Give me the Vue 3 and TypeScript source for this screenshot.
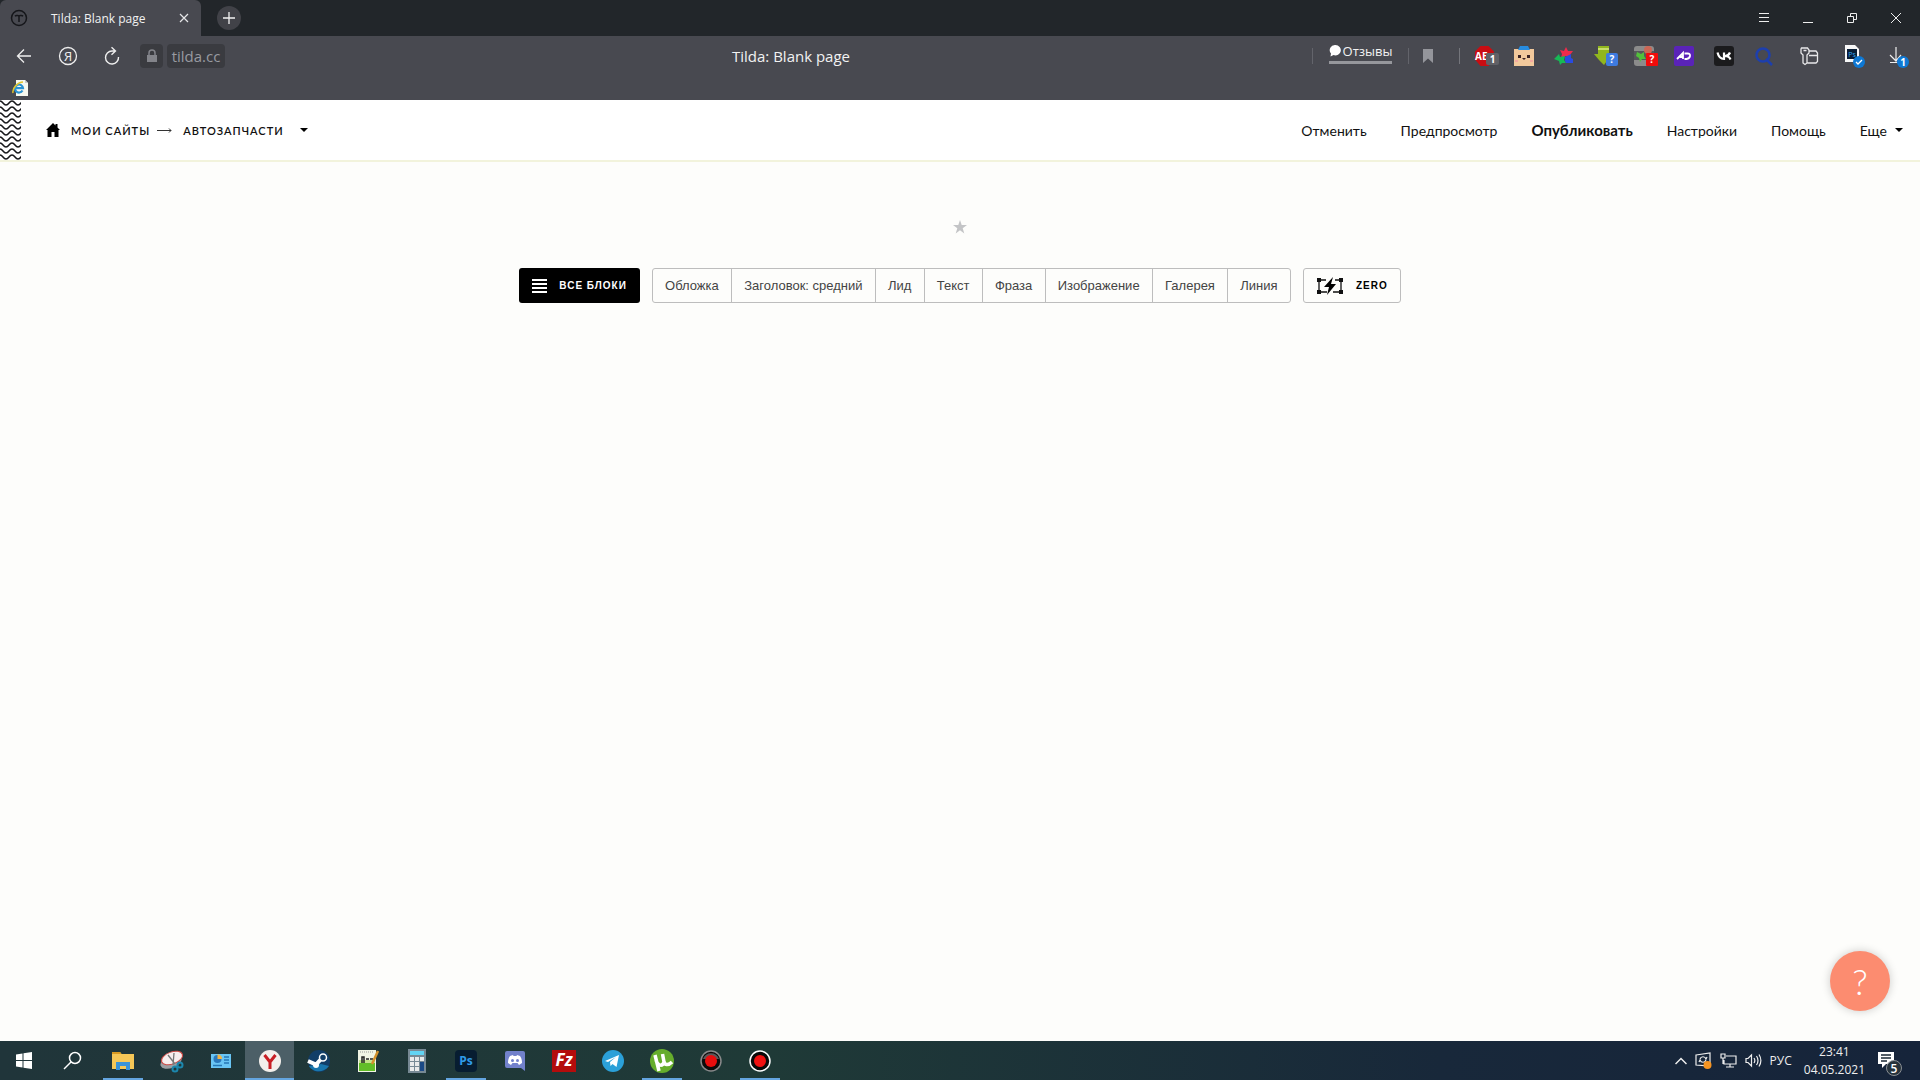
<script setup lang="ts">
interface Task { id: string; label: string; open?: boolean; active?: boolean }

const blocks: string[] = ['Обложка', 'Заголовок: средний', 'Лид', 'Текст', 'Фраза', 'Изображение', 'Галерея', 'Линия']

const extensions = ['adblock', 'robot', 'pinwheel', 'android', 'photo', 'ad', 'vk', 'search']

const tasks: Task[] = [
  { id: 'start', label: 'Пуск' },
  { id: 'find', label: 'Поиск' },
  { id: 'folder', label: 'Проводник', open: true },
  { id: 'snip', label: 'Ножницы' },
  { id: 'panel', label: 'Панель управления' },
  { id: 'yandex', label: 'Яндекс.Браузер', active: true },
  { id: 'steam', label: 'Steam' },
  { id: 'notepad', label: 'Notepad++' },
  { id: 'calc', label: 'Калькулятор' },
  { id: 'ps', label: 'Photoshop', open: true },
  { id: 'discord', label: 'Discord' },
  { id: 'filezilla', label: 'FileZilla' },
  { id: 'telegram', label: 'Telegram' },
  { id: 'utorrent', label: 'uTorrent', open: true },
  { id: 'bandicam', label: 'Bandicam' },
  { id: 'record', label: 'Запись', open: true },
]
</script>

<template>
  <div class="screen">
    <div class="tabs">
      <div class="tab">
        <svg class="favicon" width="18" height="18" viewBox="0 0 18 18" fill="none" stroke="#15161a" stroke-width="1.5">
          <circle cx="9" cy="9" r="7.5" />
          <path d="M5 7.2c1.2-1.6 2.600-.4 4-.4s2.800-1.200 4 .4M9 7v6" />
        </svg>
        <span class="tab-title">Tilda: Blank page</span>
        <button class="bare" aria-label="Закрыть вкладку">
          <svg width="10" height="10" viewBox="0 0 10 10" stroke="#e6e6e8" stroke-width="1.200"><path d="M1 1l8 8M9 1L1 9" /></svg>
        </button>
      </div>
      <button class="new-tab" aria-label="Новая вкладка">
        <svg width="12" height="12" viewBox="0 0 12 12" stroke="#f2f2f2" stroke-width="1.300"><path d="M6 0v12M0 6h12" /></svg>
      </button>
      <div class="window-controls">
        <button class="cell" aria-label="Меню"><svg width="12" height="12" viewBox="0 0 12 12" stroke="#eee"><path d="M1 1.500h10M1 5.500h10M1 9.500h10" /></svg></button>
        <button class="cell" aria-label="Свернуть"><svg width="12" height="12" viewBox="0 0 12 12" stroke="#eee"><path d="M1 10.500h10" /></svg></button>
        <button class="cell" aria-label="Восстановить"><svg width="12" height="12" viewBox="0 0 12 12" fill="none" stroke="#eee"><path d="M1.500 4.500h6v6h-6zM4.500 4V1.500h6v6H8" /></svg></button>
        <button class="cell" aria-label="Закрыть"><svg width="12" height="12" viewBox="0 0 12 12" stroke="#eee"><path d="M1 1l10 10M11 1L1 11" /></svg></button>
      </div>
    </div>

    <div class="toolbar">
      <button class="cell" aria-label="Назад"><svg width="16" height="16" viewBox="0 0 16 16" fill="none" stroke="#eee" stroke-width="1.300"><path d="M15 8H2M8 1.500L1.500 8 8 14.500" /></svg></button>
      <button class="cell" aria-label="Яндекс">
        <svg width="20" height="20" viewBox="0 0 20 20"><circle cx="10" cy="10" r="8.500" fill="none" stroke="#eee" stroke-width="1.300" /><text x="10" y="14.500" text-anchor="middle" font-size="13" fill="#eee">Я</text></svg>
      </button>
      <button class="cell" aria-label="Обновить"><svg width="18" height="20" viewBox="0 0 18 20" fill="none" stroke="#eee" stroke-width="1.400"><path d="M12 5H9A6.500 6.500 0 1 0 15.500 11M8.500 1.200L12.500 5 8.500 8.800" /></svg></button>
      <div class="address">
        <span class="chip"><svg width="12" height="14" viewBox="0 0 12 14"><path d="M1 6h10v7H1z" fill="#83848a" /><path d="M3 6.500V4a3 3 0 0 1 6 0v2.500" fill="none" stroke="#83848a" stroke-width="1.500" /></svg></span>
        <span class="chip domain">tilda.cc</span>
      </div>
      <div class="page-title">Tilda: Blank page</div>
      <div class="reviews">
        <a href="#" class="review-link">
          <svg width="13" height="12" viewBox="0 0 13 12" fill="#fff"><path d="M6.500 0a5.500 5.200 0 1 1-2 10.100L1.500 11.500l.5-3A5.500 5.200 0 0 1 6.500 0z" /></svg>
          <span>Отзывы</span>
        </a>
      </div>
      <button class="bookmark" aria-label="В закладки"><svg width="10" height="14" viewBox="0 0 10 14" fill="#94959b"><path d="M0 0h10v14L5 9.500 0 14z" /></svg></button>
      <div class="extensions">
        <button v-for="e in extensions" :key="e" class="cell ext" :aria-label="e">
          <svg v-if="e === 'adblock'" width="26" height="22" viewBox="0 0 26 22">
            <path d="M6.500 1h8L20 6.500v8L14.500 21h-8L1 14.500v-8z" fill="#c90d12" />
            <text x="1" y="15" font-size="10" font-weight="700" fill="#fff">AE</text>
            <rect x="12" y="8" width="13" height="12" rx="2" fill="#606066" /><text x="18.500" y="18" text-anchor="middle" font-size="10" font-weight="700" fill="#fff">1</text>
          </svg>
          <svg v-else-if="e === 'robot'" width="20" height="20" viewBox="0 0 20 20">
            <rect y="3" width="20" height="17" fill="#f2c99c" /><path d="M6 0h8l2 4H4z" fill="#278ce0" />
            <path d="M4 9h3v3H4zM13 9h3v3h-3zM8 12h4l-2 2z" fill="#3b2424" /><path d="M1 15h3M16 15h3" stroke="#f4a9a0" stroke-width="2" />
          </svg>
          <svg v-else-if="e === 'pinwheel'" width="20" height="20" viewBox="0 0 20 20">
            <path d="M12 1l2 4 5 0-3 4 1 3-5-2-5 2 1-4-2-4 4 1z" fill="#ef2b4b" /><path d="M0 13l5-5 1 3 5-1-1 4 2 3-4 0-2 2-1-4z" fill="#17b955" /><path d="M11 11l6-3v4l2 1v4l-7 0-1-2z" fill="#294be0" />
          </svg>
          <svg v-else-if="e === 'android'" width="26" height="22" viewBox="0 0 26 22">
            <path d="M4 1h11v8h4l-4 4-5 7-5-5-5-6h4z" fill="#91b61e" /><path d="M4 4h11" stroke="#c7de6a" stroke-width="2" />
            <rect x="12" y="8" width="12" height="13" rx="2" fill="#3e7be0" /><text x="18" y="18" text-anchor="middle" font-size="10" font-weight="700" fill="#fff">?</text>
          </svg>
          <svg v-else-if="e === 'photo'" width="26" height="22" viewBox="0 0 26 22">
            <rect x="0" y="1" width="20" height="20" rx="3" fill="#8b8b8b" /><rect x="0" y="6" width="20" height="9" fill="#55575a" /><path d="M3 7l4 2 3-2 0 4 2 3-4 0-2 3-1-4-3-2z" fill="#52bf3b" /><circle cx="14" cy="5" r="4" fill="#cc6655" />
            <rect x="12" y="8" width="12" height="13" rx="1" fill="#f00b0b" /><text x="18" y="18" text-anchor="middle" font-size="10" font-weight="700" fill="#fff">?</text>
          </svg>
          <svg v-else-if="e === 'ad'" width="20" height="20" viewBox="0 0 20 20">
            <rect width="20" height="20" rx="2" fill="#5a23b8" /><path d="M3 13l6-6v6M6 11h3M10.500 7.500h3q3 0 2.500 2.500t-3.500 3h-2" fill="none" stroke="#fff" stroke-width="1.800" />
          </svg>
          <svg v-else-if="e === 'vk'" width="20" height="20" viewBox="0 0 20 20">
            <rect width="20" height="20" rx="3" fill="#1b1b1d" /><path d="M3.500 6.500c1 4 3 6.500 6.500 6.500V6.500M16 6.500C15 9 13 10 11 10c2 0 4.500 1 5.500 3.500" fill="none" stroke="#fff" stroke-width="2.200" />
          </svg>
          <svg v-else width="20" height="20" viewBox="0 0 20 20" fill="none" stroke="#1d3fae">
            <circle cx="9" cy="9" r="6.500" stroke-width="2.500" /><path d="M12 13l6 6" stroke-width="2.500" />
          </svg>
        </button>
      </div>
      <button class="cell" aria-label="Пароли">
        <svg width="20" height="20" viewBox="0 0 20 20" fill="none" stroke="#e8e8ea" stroke-width="1.300"><path d="M2.500 2h6l1.500 2v3L8 9v8l-2 1.500L4 17V9L2 7V3zM4.500 4.500h3M10 5h7l1.500 2v8.500L17 17H8.500M10 9.500h8.500" /></svg>
      </button>
      <button class="cell badged" aria-label="Загруженный файл">
        <svg width="22" height="24" viewBox="0 0 22 24"><path d="M1 1h10l4 4v13H1z" fill="#f7f7f7" /><rect x="3" y="5" width="10" height="10" fill="#081d35" /><text x="8" y="12.500" text-anchor="middle" font-size="7" fill="#35a5f2">Ps</text><circle cx="15" cy="18" r="6" fill="#0e78d4" /><path d="M12 18l2 2 4-4" fill="none" stroke="#fff" stroke-width="1.300" /></svg>
      </button>
      <button class="cell badged" aria-label="Загрузки">
        <svg width="22" height="24" viewBox="0 0 22 24"><path d="M8 3v14M2 11l6 6 5-6M2 18.500h8" fill="none" stroke="#eee" stroke-width="1.200" /><circle cx="15" cy="18" r="6" fill="#0e78d4" /><text x="15" y="22" text-anchor="middle" font-size="10" font-weight="700" fill="#fff">1</text></svg>
      </button>
    </div>

    <div class="bookmarks">
      <a href="#" aria-label="Закладка">
        <svg width="18" height="16" viewBox="0 0 18 16"><path d="M4 0h9l3 3v13H4z" fill="#f7f8ee" /><path d="M13 0l3 3h-3z" fill="#c8ccc8" /><path d="M10.500 10.500A4 4 0 1 1 11 8.200H4" fill="none" stroke="#2992d2" stroke-width="2.200" /><path d="M1 13C0 8 6 2 11 2" fill="none" stroke="#e3c52c" stroke-width="1.500" /></svg>
      </a>
    </div>

    <header class="site-header">
      <svg class="waves" width="21" height="60" aria-hidden="true">
        <defs><pattern id="wave" width="12" height="6" patternUnits="userSpaceOnUse"><path d="M-6 5C-3 5-3 1 0 1S3 5 6 5 9 1 12 1s3 4 6 4" fill="none" stroke="#17181b" stroke-width="1.500" /></pattern></defs>
        <rect width="21" height="60" fill="url(#wave)" />
      </svg>
      <nav class="crumbs" aria-label="Путь">
        <svg width="14" height="14" viewBox="0 0 14 14"><path d="M7 0l2.500 2.500V1h2v3.500L14 7h-1.500v7H8.500V9h-3v5H1.500V7H0z" /></svg>
        <a href="#">МОИ САЙТЫ</a>
        <svg class="arrow" width="15" height="7" viewBox="0 0 15 7" fill="none" stroke="#333"><path d="M0 3.500h14M12 1.500l2 2-2 2" /></svg>
        <a href="#">АВТОЗАПЧАСТИ</a>
        <button class="bare caret" aria-label="Список страниц"><svg width="8" height="4" viewBox="0 0 8 4"><path d="M0 0h8L4 4z" /></svg></button>
      </nav>
      <nav class="menu" aria-label="Действия">
        <a href="#">Отменить</a>
        <a href="#">Предпросмотр</a>
        <a href="#" class="publish">Опубликовать</a>
        <a href="#">Настройки</a>
        <a href="#">Помощь</a>
        <a href="#" class="more">Еще <svg width="8" height="4" viewBox="0 0 8 4"><path d="M0 0h8L4 4z" /></svg></a>
      </nav>
    </header>

    <main class="page">
      <svg class="star" width="14" height="14" viewBox="0 0 14 14" fill="#c3c4c6"><path d="M7 0l1.700 5H14L9.700 8.200 11.300 13.500 7 10.300 2.700 13.500 4.300 8.200 0 5h5.300z" /></svg>
      <div class="library">
        <button class="all">
          <svg width="15" height="14" viewBox="0 0 15 14" stroke="#fff" stroke-width="2"><path d="M0 1h15M0 5h15M0 9h15M0 13h15" /></svg>
          <span>ВСЕ БЛОКИ</span>
        </button>
        <div class="group">
          <button v-for="b in blocks" :key="b">{{ b }}</button>
        </div>
        <button class="zero">
          <svg width="28" height="18" viewBox="0 0 28 18"><path d="M10 3H3v12h8M19 3h6v12h-8" fill="none" stroke="#111" stroke-width="1.300" /><path d="M1 1h4v4H1zM23 1h4v4h-4zM1 13h4v4H1zM23 13h4v4h-4z" fill="#111" /><path d="M17 0L8 10h5l-2 8 9-11h-5z" fill="#000" /></svg>
          <span>ZERO</span>
        </button>
      </div>
      <button class="help" aria-label="Помощь">?</button>
    </main>

    <footer class="taskbar">
      <button v-for="t in tasks" :key="t.id" class="task" :class="{ open: t.open, active: t.active }" :aria-label="t.label">
        <svg width="24" height="24" viewBox="0 0 24 24">
          <g v-if="t.id === 'start'" fill="#fff"><path d="M3 5.500l6.500-1V11H3zM10.500 4.300L19 3v8h-8.500zM3 12h6.500v6.500L3 17.500zM10.500 12H19v8l-8.500-1.300z" /></g>
          <g v-else-if="t.id === 'find'" fill="none" stroke="#fff" stroke-width="1.500"><circle cx="13" cy="9" r="5.500" /><path d="M9 13L2 20" /></g>
          <g v-else-if="t.id === 'folder'"><path d="M1 3h8l1.500 2H23v15H1z" fill="#f6c757" /><path d="M1 3h8l1.500 2H1z" fill="#d99a22" /><path d="M5 13h14v8h-4v-4H9v4H5z" fill="#3a93d8" /></g>
          <g v-else-if="t.id === 'snip'"><ellipse cx="11" cy="13" rx="11" ry="6" fill="#9c9ea2" transform="rotate(-20 11 13)" /><ellipse cx="12" cy="9" rx="11" ry="6" fill="#f7eeee" stroke="#cc4a45" transform="rotate(-20 12 9)" /><path d="M8 6l7 9M14 4l-1 12" stroke="#777" stroke-width="1.300" /><g fill="none" stroke="#1c87ad" stroke-width="2"><circle cx="20" cy="16" r="2.500" /><circle cx="15" cy="20" r="2.500" /></g></g>
          <g v-else-if="t.id === 'panel'"><path d="M2 5h20v14H2z" fill="#69c5f4" /><circle cx="8.500" cy="10" r="4" fill="#2a78bb" /><path d="M8.500 10V5.500a4 4 0 0 1 4.500 4.500z" fill="#f4b545" /><path d="M15 8h5M15 11h5M15 14h5M4 16.500h9" stroke="#2677b5" stroke-width="1.500" /></g>
          <g v-else-if="t.id === 'yandex'"><circle cx="12" cy="12" r="11" fill="#f3efeb" /><path d="M6.500 6l5.500 7 5.500-7M12 12v8" fill="none" stroke="#c81e24" stroke-width="3" /></g>
          <g v-else-if="t.id === 'steam'"><circle cx="12" cy="12" r="11" fill="#123e68" /><path d="M2 17c3 6 14 8 20 0l-8-2z" fill="#1976ad" /><path d="M1 12l8 3.500L15 9" fill="none" stroke="#fff" stroke-width="4" /><circle cx="16" cy="8.500" r="3.500" fill="#123e68" stroke="#fff" stroke-width="1.500" /><circle cx="9" cy="16" r="3" fill="#fff" /></g>
          <g v-else-if="t.id === 'notepad'"><path d="M2 1h18v22H2z" fill="#f1f4e4" /><path d="M3 14h16v8H3z" fill="#62bd28" /><path d="M3 11h16v3H3z" fill="#c4e28c" /><path d="M4 3h14" stroke="#999" stroke-dasharray="1 1" /><path d="M6 14V8h2v6M10 10h3M14 10h3" fill="none" stroke="#222" stroke-width="1.500" /><path d="M22 2l-6 13" stroke="#d3912c" stroke-width="2.500" /></g>
          <g v-else-if="t.id === 'calc'"><path d="M3 0h18v24H3z" fill="#778994" /><path d="M5 2h14v4H5z" fill="#62d4f3" /><path d="M5 8h4v4H5zM10 8h4v4h-4zM15 8h4v4h-4zM5 13h4v4H5zM10 13h4v4h-4zM5 18h4v4H5zM10 18h4v4h-4z" fill="#e9eaea" /><path d="M15 13h4v9h-4z" fill="#1c4a86" /></g>
          <g v-else-if="t.id === 'ps'"><rect x="1" y="1" width="22" height="22" rx="4" fill="#071d31" /><text x="12" y="16" text-anchor="middle" font-size="12" font-weight="700" fill="#2f9be8">Ps</text></g>
          <g v-else-if="t.id === 'discord'"><path d="M4 2h16a2 2 0 0 1 2 2v18l-4-3H4a2 2 0 0 1-2-2V4a2 2 0 0 1 2-2z" fill="#7281cb" /><path d="M7 7l3-1 .5 1h3l.5-1 3 1c2 3 2 5 2 7l-3 2-1.500-2h-5L8 16l-3-2c0-3 .5-5 2-7z" fill="#fff" /><circle cx="9.500" cy="11.500" r="1.500" fill="#7281cb" /><circle cx="14.500" cy="11.500" r="1.500" fill="#7281cb" /></g>
          <g v-else-if="t.id === 'filezilla'"><path d="M0 1h24v22H0z" fill="#b40c0c" /><text x="12" y="17" text-anchor="middle" font-size="17" font-weight="700" font-style="italic" fill="#fff">Fz</text></g>
          <g v-else-if="t.id === 'telegram'"><circle cx="12" cy="12" r="11" fill="#2ba0d8" /><path d="M4 12l14-6-2.500 12-4-3-2 2-.5-4 6-5-8 5z" fill="#fff" /></g>
          <g v-else-if="t.id === 'utorrent'"><circle cx="12" cy="12" r="12" fill="#66ad2c" /><path d="M5 6l4 16M6 11c2 7 7 6 8 2L12.500 5M14 12c0 4 4 5 8 1" fill="none" stroke="#fff" stroke-width="3.500" /></g>
          <g v-else-if="t.id === 'bandicam'"><circle cx="12" cy="12" r="10" fill="#0b0b0b" stroke="#88898a" stroke-width="1.500" /><path d="M4 10a8.500 8.500 0 0 1 16 0z" fill="#58595a" /><circle cx="12" cy="12" r="6" fill="#e70d0d" /></g>
          <g v-else><circle cx="12" cy="12" r="10" fill="#090909" stroke="#fff" stroke-width="1.500" /><circle cx="12" cy="12" r="6" fill="#f01010" /></g>
        </svg>
      </button>
      <div class="tray">
        <button class="bare" aria-label="Скрытые значки"><svg width="12" height="8" viewBox="0 0 12 8" fill="none" stroke="#eee" stroke-width="1.500"><path d="M.5 7L6 1.500 11.500 7" /></svg></button>
        <svg width="17" height="17" viewBox="0 0 17 17" fill="none" stroke="#eee" stroke-width="1.200"><path d="M1 3l14-2v13L1 13zM5 7c1-3 5-3 6 0l1-2M11 8c-1 3-5 3-6 0l-1 2" /><circle cx="12.500" cy="13" r="4" fill="#f59422" stroke="none" /></svg>
        <svg width="17" height="15" viewBox="0 0 17 15" fill="none" stroke="#eee" stroke-width="1.200"><path d="M6 3h10v8H4V7M10 11v3M6 14h8M1 1h4v4H1zM3 5v6" /></svg>
        <svg width="17" height="15" viewBox="0 0 17 15" fill="none" stroke="#eee" stroke-width="1.200"><path d="M1 5.500h2L6.500 2v11L3 9.500H1zM9 5c1 1.500 1 3.500 0 5M11.500 3c2 3 2 6 0 9M14 1.500c2.500 4 2.500 8 0 12" /></svg>
        <button class="bare lang">РУС</button>
        <div class="clock"><span>23:41</span><span>04.05.2021</span></div>
        <button class="bare notes" aria-label="Уведомления">
          <svg width="26" height="26" viewBox="0 0 26 26"><path d="M1 2h16v12H9l-4 4v-4H1z" fill="#fff" /><path d="M4 5h10M4 8h10M4 11h6" stroke="#1a2733" stroke-width="1.300" /><circle cx="17" cy="18" r="7.500" fill="#26323b" stroke="#8a8f94" /><text x="17" y="22.500" text-anchor="middle" font-size="12" font-weight="600" fill="#fff">5</text></svg>
        </button>
      </div>
    </footer>
  </div>
</template>

<style>
body { margin: 0; }
</style>

<style scoped>
.screen { display: flex; flex-direction: column; min-height: 100vh; background: #fdfdfb; font-family: "Open Sans", "Noto Sans", sans-serif; }
* { box-sizing: border-box; }
button { margin: 0; padding: 0; border: 0; background: none; font: inherit; color: inherit; display: flex; align-items: center; justify-content: center; }
a { color: inherit; text-decoration: none; }
svg { display: block; flex: none; }
.tabs { display: flex; align-items: center; height: 36px; background: #22262a; padding-right: 2px; }
.tab { display: flex; align-items: center; width: 201px; height: 36px; padding: 0 12px 0 10px; background: #484950; border-radius: 6px 6px 0 0; color: #f1f1f1; font-size: 12px; }
.tab-title { flex: 1; padding-left: 23px; }
.new-tab { width: 24px; height: 24px; margin-left: 16px; border-radius: 50%; background: #414248; }
.window-controls { display: flex; margin-left: auto; }
.cell { width: 44px; height: 40px; flex: none; }
.window-controls .cell { height: 36px; }
.toolbar { display: flex; align-items: center; height: 40px; padding: 0 1px 0 2px; background: #484950; color: #f2f2f2; }
.address { display: flex; gap: 4px; margin-left: 6px; }
.chip { display: flex; align-items: center; justify-content: center; width: 23px; height: 24px; border-radius: 4px; background: #3a3b40; }
.domain { width: 58px; color: #989aa1; font-size: 15px; }
.page-title { flex: 1; padding-left: 45px; text-align: center; font-size: 15px; }
.reviews { display: flex; align-items: center; justify-content: center; width: 97px; height: 16px; border-left: 1px solid #63646b; border-right: 1px solid #63646b; }
.review-link { display: flex; align-items: center; gap: 1px; height: 24px; margin-bottom: 8px; border-bottom: 3px solid #96979c; font-size: 13px; }
.bookmark { width: 51px; height: 16px; padding-right: 12px; border-right: 1px solid #74757b; }
.extensions { display: flex; margin: 0 3px 0 4px; }
.ext { width: 40px; justify-content: flex-start; padding-left: 10px; }
.badged { padding-left: 4px; }
.bookmarks { display: flex; height: 24px; padding: 4px 12px; background: #484950; }
.site-header { display: flex; align-items: center; height: 62px; padding-right: 17px; background: #fff; border-bottom: 2px solid #f2f3dc; color: #111; font-family: Lato, "Open Sans", sans-serif; }
.waves { align-self: flex-start; }
.crumbs { display: flex; align-items: center; margin-left: 25px; font-size: 11px; font-weight: 600; letter-spacing: 1px; }
.crumbs a { margin-left: 11px; }
.arrow { margin-left: 7px; }
.caret { margin-left: 16px; }
.menu { display: flex; align-items: center; gap: 34px; margin-left: auto; font-size: 14px; }
.publish { font-size: 15px; font-weight: 700; }
.more { display: flex; align-items: center; gap: 8px; }
.page { position: relative; flex: 1; display: flex; flex-direction: column; align-items: center; padding-top: 58px; }
.library { display: flex; gap: 12px; margin-top: 34px; font-family: "Liberation Sans", Arial, sans-serif; }
.library button { height: 35px; font-size: 13px; color: #444; }
.library .all, .library .zero { font-size: 10px; font-weight: 700; letter-spacing: 1px; border-radius: 3px; gap: 12px; padding: 0 13px; }
.library .all { background: #000; color: #fff; }
.library .zero { border: 1px solid #bdbdbd; color: #000; padding: 0 12px; }
.group { display: flex; min-width: 639px; border: 1px solid #bdbdbd; border-radius: 3px; height: 35px; }
.library .group button { flex-grow: 1; height: 33px; padding: 0 12px; }
.library .group button + button { border-left: 1px solid #bdbdbd; }
.help { position: absolute; right: 30px; bottom: 30px; width: 60px; height: 60px; border-radius: 50%; background: #fc8c70; color: #fff; font: 300 36px Lato, sans-serif; box-shadow: 0 0 10px rgba(0, 0, 0, 0.2); }
.taskbar { display: flex; height: 39px; background: linear-gradient(90deg, #20353a, #1f3a37 40%, #18283a 75%, #16243a); color: #eee; }
.task { width: 49px; height: 39px; border-bottom: 2px solid transparent; padding-top: 2px; position: relative; }
.task.open::after { content: ""; position: absolute; left: 5px; right: 4px; bottom: -2px; height: 2px; background: #64a5e0; }
.task.active { background: #4c5f67; border-bottom-color: #64a5e0; }
.tray { display: flex; align-items: center; margin-left: auto; gap: 8px; font-size: 12px; }
.clock { display: flex; flex-direction: column; align-items: center; line-height: 18px; margin-left: 4px; }
.notes { width: 42px; height: 39px; padding: 5px 8px 0 0; margin-right: 5px; }
</style>
